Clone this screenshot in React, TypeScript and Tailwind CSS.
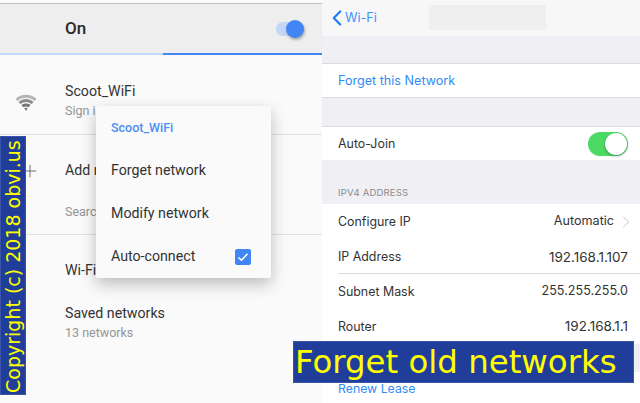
import { ChevronLeft, ChevronRight, Plus } from "lucide-react";

const androidFont = "font-['Roboto',sans-serif]";
const iosFont = "font-['Inter',sans-serif]";

function AndroidRow({ title, subtitle, className }: { title: string; subtitle?: string; className: string }) {
  return (
    <div className={`pl-[65px] ${className}`}>
      <div className="text-[14.2px] leading-[20px] text-[#333333]">{title}</div>
      {subtitle && <div className="text-[12.5px] leading-[20px] text-[#959595]">{subtitle}</div>}
    </div>
  );
}

function WifiIcon() {
  return (
    <svg width="22" height="18" viewBox="0 0 22 18" className="absolute left-[15px] top-[39px]">
      <path d="M0.5 5 C6 -0.6 16 -0.6 21.5 5 L19.6 7 C14.6 2.6 7.4 2.6 2.4 7 Z" fill="#b5b5b5" />
      <path d="M3.4 8 C8 4 14 4 18.6 8 L16.6 10 C13 7.2 9 7.2 5.4 10 Z" fill="#8a8a8a" />
      <path d="M6.4 11 C9.2 9 12.8 9 15.6 11 L13.6 13.2 C12 12.2 10 12.2 8.4 13.2 Z" fill="#777777" />
      <path d="M9.3 14.3 C10.4 13.7 11.6 13.7 12.7 14.3 L11 17 Z" fill="#777777" />
    </svg>
  );
}

function AndroidPanel() {
  return (
    <div className={`relative w-[322px] h-full shrink-0 bg-[#fafafa] ${androidFont}`}>
      <div className="h-[4px] bg-[#fafafa] border-b border-[#bdbdbd]" />
      <div className="flex h-[49px] items-center justify-between bg-[#eeeeee] pl-[65px] pr-[18px]">
        <span className="pt-[1px] text-[17px] font-medium text-[#2a2a2a]">On</span>
        <span className="relative block h-[14px] w-[28px] rounded-full bg-[#c3d6f5]">
          <span className="absolute right-0 top-[-2px] h-[18px] w-[18px] rounded-full bg-[#4285f4] shadow-[1px_2px_3px_rgba(0,0,0,0.3)]" />
        </span>
      </div>
      <div className="flex h-[2px]">
        <div className="w-[163px] bg-[#c5dafb]" />
        <div className="flex-1 bg-[#4285f4]" />
      </div>
      <div className="relative h-[80px] border-b border-[#e0e0e0] pt-[26px]">
        <WifiIcon />
        <AndroidRow title="Scoot_WiFi" subtitle="Sign i" className="" />
      </div>
      <div className="relative h-[100px] border-b border-[#e0e0e0] pt-[25px]">
        <Plus size={20} strokeWidth={1} className="absolute left-[20px] top-[26px] text-[#555555]" />
        <AndroidRow title="Add n" className="" />
        <div className="mt-[22px] pl-[65px] text-[12.5px] leading-[20px] text-[#959595]">Searc</div>
      </div>
      <AndroidRow title="Wi-Fi" className="pt-[25px]" />
      <AndroidRow title="Saved networks" subtitle="13 networks" className="pt-[23px]" />

      <div className="absolute left-[96px] top-[106px] flex h-[172px] w-[175px] flex-col rounded-[2px] bg-[#fafafa] pl-[15px] pr-[20px] text-[14.2px] text-[#333333] shadow-[0_6px_16px_rgba(0,0,0,0.25)]">
        <div className="flex h-[44px] items-center text-[12.5px] font-medium text-[#4a8ef5]">Scoot_WiFi</div>
        <div className="flex h-[43px] items-center">Forget network</div>
        <div className="flex h-[43px] items-center">Modify network</div>
        <div className="flex h-[43px] items-center justify-between">
          <span>Auto-connect</span>
          <span className="flex h-[16px] w-[16px] items-center justify-center rounded-[2px] bg-[#4285f4]">
            <svg width="12" height="12" viewBox="0 0 12 12">
              <path d="M1.5 6.5 L4.5 9.2 L10.5 2.8" fill="none" stroke="#ffffff" strokeWidth="1.6" />
            </svg>
          </span>
        </div>
      </div>
    </div>
  );
}

function IosRow({
  label,
  value,
  chevron,
  valueClass = "text-[13.5px]",
  className,
}: {
  label: string;
  value: string;
  chevron?: boolean;
  valueClass?: string;
  className: string;
}) {
  return (
    <div className={`flex items-center justify-between pl-[16px] pr-[12px] text-[#333333] ${className}`}>
      <span className="pt-[1px] text-[12.4px]">{label}</span>
      {chevron ? (
        <span className="flex items-center gap-[2px] text-[12.6px]">
          {value}
          <ChevronRight size={20} strokeWidth={1} className="mr-[-8px] text-[#b8b8bc]" />
        </span>
      ) : (
        <span className={valueClass}>{value}</span>
      )}
    </div>
  );
}

function IosPanel() {
  return (
    <div className={`h-full flex-1 bg-[#efeff4] ${iosFont}`}>
      <div className="flex h-[36px] items-center bg-[#f7f7f7] pl-[6px]">
        <ChevronLeft size={26} strokeWidth={2} className="ml-[-4px] text-[#1a7ef5]" />
        <span className="ml-[-5px] pt-[1px] text-[12.6px] text-[#3b93f7]">Wi-Fi</span>
        <div className="ml-[52px] mt-[-2px] h-[25px] w-[117px] bg-[#efefef]" />
      </div>
      <div className="mt-[27px] flex h-[35px] items-center border-y border-[#dcdce0] bg-white pl-[16px] pt-[1px] text-[12.6px] text-[#2f8cf6]">
        Forget this Network
      </div>
      <div className="mt-[28px] flex h-[34px] items-center justify-between border-t border-[#dcdce0] bg-white pl-[16px] pr-[12px] text-[12.4px] text-[#333333]">
        <span className="pt-[1px]">Auto-Join</span>
        <span className="relative block h-[24px] w-[40px] rounded-full bg-[#4cd964]">
          <span className="absolute right-[1px] top-[1px] h-[22px] w-[22px] rounded-full bg-white shadow-[0_1px_3px_rgba(0,0,0,0.35)]" />
        </span>
      </div>
      <div className="flex h-[44px] items-end pb-[4px] pl-[16px] text-[9.5px] tracking-[0.2px] text-[#8a8a8f]">IPV4 ADDRESS</div>
      <div className="bg-white">
        <IosRow label="Configure IP" value="Automatic" chevron className="h-[35px]" />
        <IosRow label="IP Address" value="192.168.1.107" className="h-[34px] pt-[2px]" />
        <div className="ml-[16px] border-t border-[#dcdce0]" />
        <IosRow label="Subnet Mask" value="255.255.255.0" valueClass="text-[12.6px]" className="h-[35px]" />
        <IosRow label="Router" value="192.168.1.1" className="h-[35px]" />
      </div>
      <div className="h-[28px]" />
      <div className="h-[31px] bg-white pl-[16px] pt-[9px] text-[12.3px] leading-[16px] text-[#2f8cf6]">Renew Lease</div>
    </div>
  );
}

export default function App() {
  return (
    <div className="relative flex h-[403px] w-[640px] overflow-hidden bg-white">
      <AndroidPanel />
      <IosPanel />
      <div className="absolute left-0 top-[136px] flex h-[259px] w-[26px] items-center justify-end border border-[#3a55a8] bg-[#203e99] pb-[3px] [writing-mode:vertical-rl] rotate-180">
        <span className="whitespace-nowrap font-['DejaVu_Sans',sans-serif] text-[19px] leading-[24px] text-[#ffff00]">
          Copyright (c) 2018 obvi.us
        </span>
      </div>
      <div className="absolute left-[293px] top-[341px] flex h-[42px] w-[341px] items-center border border-[#3a55a8] bg-[#203e99] pl-[1px] font-['DejaVu_Sans',sans-serif] text-[32.4px] text-[#ffff00]">
        Forget old networks
      </div>
    </div>
  );
}
